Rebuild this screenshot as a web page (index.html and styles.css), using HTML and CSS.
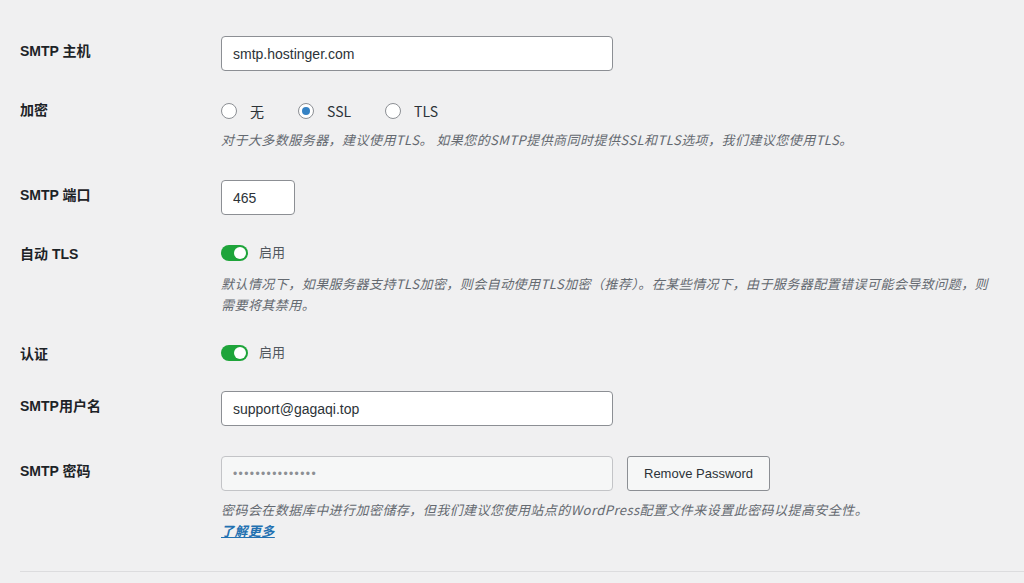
FILE: index.html
```html
<!DOCTYPE html>
<html lang="zh-CN">
<head>
    <meta charset="utf-8">
    <title>SMTP 设置</title>
    <link rel="stylesheet" href="styles.css">
</head>
<body>
    <table class="form-table">
        <tr>
            <th>SMTP 主机</th>
            <td><input type="text" class="regular-text" value="smtp.hostinger.com"></td>
        </tr>
        <tr>
            <th class="th-short">加密</th>
            <td>
                <div class="radio-group">
                    <label class="radio"><span class="radio-dot"></span>无</label>
                    <label class="radio"><span class="radio-dot checked"></span>SSL</label>
                    <label class="radio"><span class="radio-dot"></span>TLS</label>
                </div>
                <p class="description">对于大多数服务器，建议使用TLS。 如果您的SMTP提供商同时提供SSL和TLS选项，我们建议您使用TLS。</p>
            </td>
        </tr>
        <tr>
            <th>SMTP 端口</th>
            <td><input type="text" class="small-text" value="465"></td>
        </tr>
        <tr>
            <th class="th-short">自动 TLS</th>
            <td>
                <div class="toggle-line"><span class="toggle"></span><span class="toggle-label">启用</span></div>
                <p class="description after-toggle">默认情况下，如果服务器支持TLS加密，则会自动使用TLS加密（推荐）。在某些情况下，由于服务器配置错误可能会导致问题，则需要将其禁用。</p>
            </td>
        </tr>
        <tr>
            <th class="th-short">认证</th>
            <td>
                <div class="toggle-line"><span class="toggle"></span><span class="toggle-label">启用</span></div>
            </td>
        </tr>
        <tr>
            <th>SMTP用户名</th>
            <td><input type="text" class="regular-text" value="support@gagaqi.top"></td>
        </tr>
        <tr>
            <th>SMTP 密码</th>
            <td>
                <div class="password-line">
                    <input type="text" class="regular-text pass" value="•••••••••••••••" disabled>
                    <button class="button">Remove Password</button>
                </div>
                <p class="description">密码会在数据库中进行加密储存，但我们建议您使用站点的WordPress配置文件来设置此密码以提高安全性。<br><a href="#">了解更多</a></p>
            </td>
        </tr>
    </table>
    <div class="section-end"></div>
</body>
</html>
```

FILE: styles.css
```css
body {
    margin: 0;
    padding: 21px 0 0 20px;
    background-color: #f0f0f1;
    color: #1d2327;
    font-family: "Liberation Sans", "Noto Sans CJK SC", sans-serif;
    font-size: 13px;
}

.form-table {
    border-collapse: collapse;
    width: 100%;
}

.form-table th {
    width: 191px;
    padding: 20px 10px 20px 0;
    text-align: left;
    vertical-align: top;
    font-size: 14px;
    font-weight: 600;
    line-height: 20px;
}

.form-table th.th-short {
    padding: 14px 10px 10px 0;
}

.form-table td {
    padding: 15px 10px 15px 0;
    vertical-align: top;
    line-height: 20px;
}

input[type="text"] {
    box-sizing: border-box;
    height: 35px;
    padding: 0 11px;
    border: 1px solid #8c8f94;
    border-radius: 4px;
    background: #fff;
    color: #2c3338;
    font-family: inherit;
    font-size: 14px;
}

.regular-text {
    width: 392px;
}

.small-text {
    width: 74px;
}

.pass {
    background: #f6f7f7 !important;
    border-color: #c3c4c7 !important;
    color: #8c8f94 !important;
    font-size: 12px !important;
    letter-spacing: 1.4px;
}

.radio-group {
    display: flex;
    height: 20px;
    align-items: center;
}

.radio {
    display: flex;
    align-items: center;
    font-family: "Noto Sans CJK SC", sans-serif;
    font-size: 14px;
    color: #2c3338;
    margin-right: 34px;
}

.radio-dot {
    box-sizing: border-box;
    width: 16px;
    height: 16px;
    border: 1px solid #8c8f94;
    border-radius: 50%;
    background: #fff;
    margin-right: 13px;
    position: relative;
}

.radio-dot.checked::after {
    content: "";
    position: absolute;
    left: 3px;
    top: 3px;
    width: 8px;
    height: 8px;
    border-radius: 50%;
    background: #3582c4;
}

.description {
    max-width: 776px;
    margin: 8px 0 0;
    color: #646970;
    font-family: "Noto Sans CJK SC", sans-serif;
    font-style: italic;
    font-size: 13px;
    line-height: 21px;
    letter-spacing: 0.45px;
}

.description.after-toggle {
    margin-top: 12px;
}

.description a {
    color: #2271b1;
    font-weight: 600;
}

.toggle-line {
    display: flex;
    align-items: center;
    height: 16px;
}

.toggle {
    box-sizing: border-box;
    width: 27px;
    height: 16px;
    border-radius: 8px;
    background: #1ea43a;
    position: relative;
    margin-right: 11px;
}

.toggle::after {
    content: "";
    position: absolute;
    right: 2px;
    top: 2px;
    width: 12px;
    height: 12px;
    border-radius: 50%;
    background: #fff;
}

.toggle-label {
    font-size: 13px;
    color: #50575e;
}

.password-line {
    display: flex;
    align-items: center;
    gap: 14px;
}

.button {
    box-sizing: border-box;
    height: 35px;
    padding: 0 16px;
    border: 1px solid #8c8f94;
    border-radius: 3px;
    background: #f6f7f7;
    color: #2c3338;
    font-family: inherit;
    font-size: 13px;
}

.section-end {
    margin-top: 15px;
    border-top: 1px solid #dcdcde;
}
```
